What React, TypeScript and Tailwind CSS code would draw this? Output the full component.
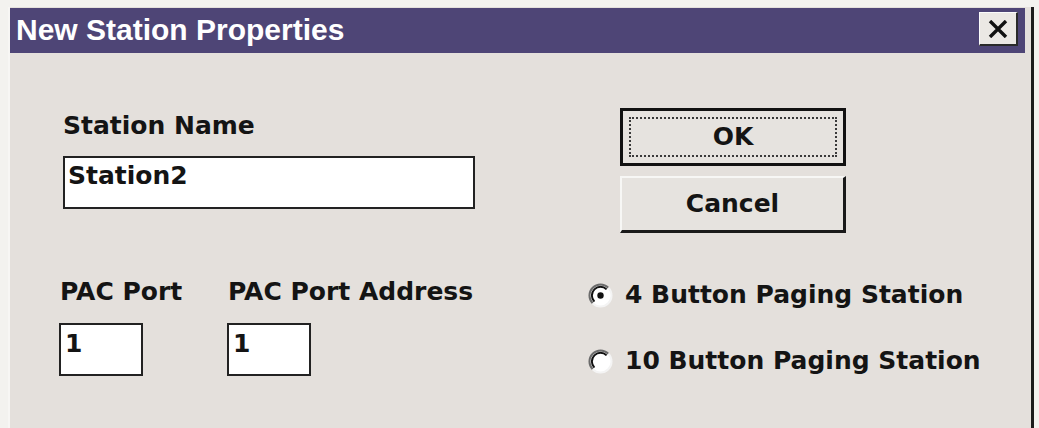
import React from "react";

const body = { fontFamily: '"DejaVu Sans", "Liberation Sans", sans-serif' };

function Radio({ checked }: { checked?: boolean }) {
  return (
    <svg width="25" height="25" viewBox="0 0 25 25" className="shrink-0">
      <circle cx="12.5" cy="12.5" r="11" fill="#ffffff" />
      <path d="M4.7 20.3 A11 11 0 0 1 20.3 4.7" fill="none" stroke="#6b6b6b" strokeWidth="2" />
      <path d="M6.4 18.6 A8.6 8.6 0 0 1 18.6 6.4" fill="none" stroke="#111" strokeWidth="2" />
      <path d="M20.3 4.7 A11 11 0 0 1 4.7 20.3" fill="none" stroke="#f4f4f4" strokeWidth="2" />
      {checked && <circle cx="12.5" cy="12.5" r="3.2" fill="#111" />}
    </svg>
  );
}

export default function App() {
  return (
    <div className="w-[1039px] h-[428px] overflow-hidden bg-[#f3f2ef] pt-[7px] pl-[8px]" style={body}>
      <div className="w-[1026px] h-[421px] flex flex-col bg-[#e4e0dc] border-l-2 border-l-[#f7f6f4] border-r-[3px] border-r-[#1c1c1c] pt-[1px]">
        {/* title bar */}
        <div className="h-[45px] mr-[6px] bg-[#4e4576] flex items-start justify-between pl-[6px] pr-[7px]">
          <span
            className="text-[30px] leading-[30px] font-bold text-white mt-[7px]"
            style={{ fontFamily: '"Liberation Sans", Arial, sans-serif' }}
          >
            New Station Properties
          </span>
          <div className="mt-[4px] w-[39px] h-[34px] bg-[#ebe8e4] border-t border-l border-[#fbfbfb] border-r-2 border-b-2 border-r-[#2a2a2a] border-b-[#2a2a2a] flex items-center justify-center">
            <svg width="20" height="18" viewBox="0 0 20 18">
              <path d="M2 1 L18 17 M18 1 L2 17" stroke="#111" strokeWidth="3.4" />
            </svg>
          </div>
        </div>

        {/* body */}
        <div className="flex flex-1 text-[25px] leading-[30px] font-bold text-[#141414]">
          {/* left column */}
          <div className="w-[578px] pl-[49px] flex flex-col">
            <div className="ml-[4px] mt-[58px] flex flex-col">
              <span>Station Name</span>
              <div className="mt-[15px] w-[412px] h-[53px] border-2 border-[#222] bg-white pl-[3px] pt-[3px]">
                Station2
              </div>
            </div>
            <div className="mt-[68px] flex">
              <div className="w-[168px] flex flex-col">
                <span className="ml-[1px]">PAC Port</span>
                <div className="mt-[16px] w-[84px] h-[53px] border-2 border-[#222] bg-white pl-[4px] pt-[4px]">1</div>
              </div>
              <div className="flex flex-col">
                <span className="ml-[1px]">PAC Port Address</span>
                <div className="mt-[16px] w-[84px] h-[53px] border-2 border-[#222] bg-white pl-[4px] pt-[4px]">1</div>
              </div>
            </div>
          </div>

          {/* right column */}
          <div className="flex flex-col">
            <div className="ml-[32px] mt-[55px] w-[226px] h-[58px] border-[3px] border-[#111] bg-[#e6e3df] p-[6px] flex">
              <div className="flex-1 border-2 border-dotted border-[#3a3a3a] flex items-center justify-center">
                OK
              </div>
            </div>
            <div className="ml-[32px] mt-[10px] w-[226px] h-[57px] bg-[#e6e3df] border-t-2 border-l-2 border-t-[#f7f7f5] border-l-[#f7f7f5] border-b-[3px] border-r-[3px] border-b-[#1a1a1a] border-r-[#1a1a1a] flex items-center justify-center">
              Cancel
            </div>
            <div className="mt-[47px] flex items-center gap-[12px] h-[30px]">
              <Radio checked />
              <span>4 Button Paging Station</span>
            </div>
            <div className="mt-[36px] flex items-center gap-[12px] h-[30px]">
              <Radio />
              <span>10 Button Paging Station</span>
            </div>
          </div>
        </div>
      </div>
    </div>
  );
}
